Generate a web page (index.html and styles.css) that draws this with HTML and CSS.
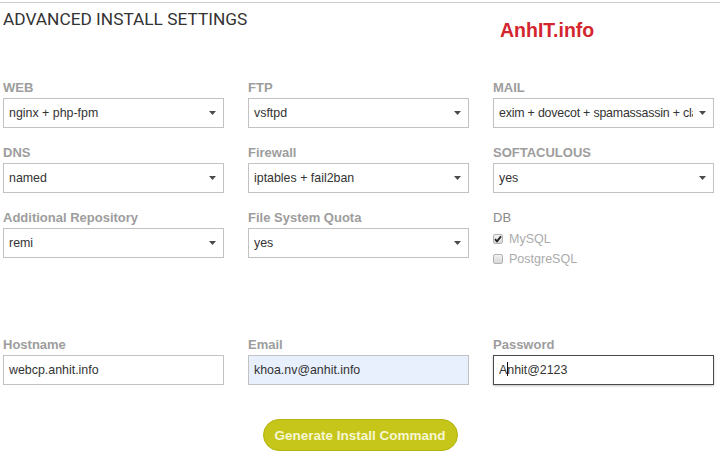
FILE: index.html
```html
<!DOCTYPE html>
<html lang="en">
<head>
  <meta charset="UTF-8" />
  <meta name="viewport" content="width=device-width, initial-scale=1.0"/>
  <title>Advanced Install Settings</title>
  <link rel="stylesheet" href="styles.css">
</head>

<body>
  <div class="page">
    <div class="header">
      <h1>ADVANCED INSTALL SETTINGS</h1>
      <div class="brand">AnhIT.info</div>
    </div>

    <div class="fields">
      <div class="field">
        <span class="label">WEB</span>
        <div class="select"><span class="value">nginx + php-fpm</span><svg class="arrow" width="7" height="4" viewBox="0 0 7 4"><path d="M0 0H7L3.5 4Z"/></svg></div>
      </div>
      <div class="field">
        <span class="label">FTP</span>
        <div class="select"><span class="value">vsftpd</span><svg class="arrow" width="7" height="4" viewBox="0 0 7 4"><path d="M0 0H7L3.5 4Z"/></svg></div>
      </div>
      <div class="field">
        <span class="label">MAIL</span>
        <div class="select"><span class="value tight">exim + dovecot + spamassassin + clamav</span><svg class="arrow" width="7" height="4" viewBox="0 0 7 4"><path d="M0 0H7L3.5 4Z"/></svg></div>
      </div>

      <div class="field">
        <span class="label">DNS</span>
        <div class="select"><span class="value">named</span><svg class="arrow" width="7" height="4" viewBox="0 0 7 4"><path d="M0 0H7L3.5 4Z"/></svg></div>
      </div>
      <div class="field">
        <span class="label">Firewall</span>
        <div class="select"><span class="value">iptables + fail2ban</span><svg class="arrow" width="7" height="4" viewBox="0 0 7 4"><path d="M0 0H7L3.5 4Z"/></svg></div>
      </div>
      <div class="field">
        <span class="label">SOFTACULOUS</span>
        <div class="select"><span class="value">yes</span><svg class="arrow" width="7" height="4" viewBox="0 0 7 4"><path d="M0 0H7L3.5 4Z"/></svg></div>
      </div>

      <div class="field">
        <span class="label">Additional Repository</span>
        <div class="select"><span class="value">remi</span><svg class="arrow" width="7" height="4" viewBox="0 0 7 4"><path d="M0 0H7L3.5 4Z"/></svg></div>
      </div>
      <div class="field">
        <span class="label">File System Quota</span>
        <div class="select"><span class="value">yes</span><svg class="arrow" width="7" height="4" viewBox="0 0 7 4"><path d="M0 0H7L3.5 4Z"/></svg></div>
      </div>
      <div class="field">
        <span class="label label-plain">DB</span>
        <div class="checks">
          <div class="check">
            <span class="box"><svg width="8" height="8" viewBox="0 0 8 8"><path d="M1 4.2L3 6.3L7 1.4" fill="none" stroke="#222" stroke-width="1.8"/></svg></span>
            MySQL
          </div>
          <div class="check">
            <span class="box"></span>
            PostgreSQL
          </div>
        </div>
      </div>
    </div>

    <div class="fields credentials">
      <div class="field">
        <span class="label">Hostname</span>
        <div class="input">webcp.anhit.info</div>
      </div>
      <div class="field">
        <span class="label">Email</span>
        <div class="input autofill">khoa.nv@anhit.info</div>
      </div>
      <div class="field">
        <span class="label">Password</span>
        <div class="input focused">A<span class="caret"></span>nhit@2123</div>
      </div>
    </div>

    <div class="actions">
      <button class="generate">Generate Install Command</button>
    </div>
  </div>
</body>
</html>
```

FILE: styles.css
```css
* { box-sizing: border-box; margin: 0; padding: 0; }
body {
  font-family: "Liberation Sans", Arial, sans-serif;
  background: #fff; color: #333;
}
.page {
  margin-top: 2px; border-top: 1px solid #cfcfcf;
  padding: 0 3px;
}
.header {
  display: grid; grid-template-columns: 221px 221px 221px; column-gap: 24px;
  height: 77px; padding-top: 6px;
}
h1 {
  grid-column: 1 / 3;
  font-family: Roboto, "Liberation Sans", sans-serif;
  font-weight: 400; font-size: 17.3px; line-height: 20px; color: #333;
}
.brand {
  margin-top: 10px; padding-left: 7px;
  font-size: 19.5px; line-height: 22px; font-weight: 700; color: #d3262e;
}
.fields {
  display: grid; grid-template-columns: 221px 221px 221px;
  column-gap: 24px; row-gap: 17px;
}
.label {
  display: block; font-size: 13px; line-height: 15px; font-weight: 700;
  color: #9d9d9d; margin-bottom: 3px;
}
.label-plain { font-weight: 400; color: #8a8a8a; }
.select, .input {
  display: flex; align-items: center;
  height: 30px; border: 1px solid #c2c2c2; background: #fff;
  padding-left: 5px; font-size: 12.4px; color: #333; white-space: nowrap;
}
.select .value { flex: 1; overflow: hidden; margin-right: 14px; }
.select .value.tight { margin-right: 6px; letter-spacing: -0.2px; }
.arrow { fill: #4a4a4a; margin-right: 7px; flex-shrink: 0; }
.input.autofill { background: #e8f0fe; }
.input.focused { border-color: #4a4a4a; box-shadow: 0 1px 2px rgba(0,0,0,0.25); }
.caret {
  display: inline-block; width: 1px; height: 14px; background: #111;
  margin-right: -1px; position: relative; top: -1px;
}
.checks { padding-top: 1px; }
.check {
  display: flex; align-items: center; gap: 6px;
  height: 20px; font-size: 12.5px; color: #ababab;
}
.box {
  width: 10px; height: 10px; border: 1px solid #b3b3b3; border-radius: 2px;
  background: linear-gradient(#f2f2f2, #d8d8d8);
  display: flex; align-items: center; justify-content: center;
}
.credentials { margin-top: 68px; }
.actions { display: flex; justify-content: center; margin-top: 34px; }
.generate {
  width: 195px; height: 32px; border-radius: 16px;
  background: #c6c61a; border: 1px solid #b4b414;
  color: #f6f6d2; font-family: "Liberation Sans", Arial, sans-serif;
  font-size: 13.5px; font-weight: 700; cursor: pointer;
}
```
